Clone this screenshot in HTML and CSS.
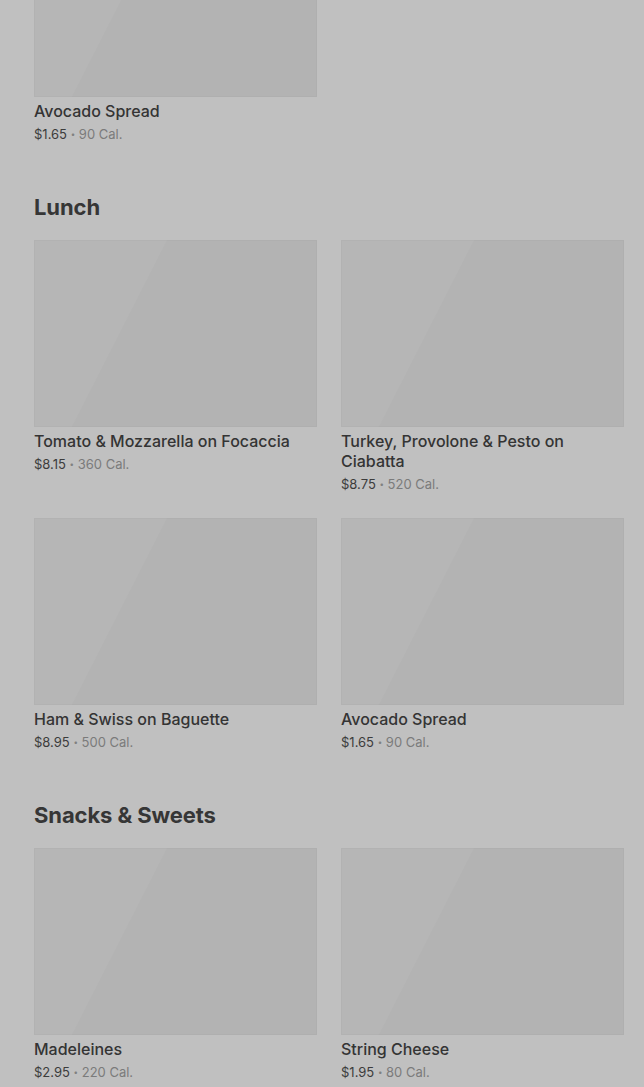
FILE: index.html
```html
<!DOCTYPE html>
<html lang="en">
<head>
<meta charset="utf-8">
<title>Menu</title>
<link rel="stylesheet" href="styles.css">
</head>
<body>
<main class="menu">
  <section class="section section--first">
    <div class="grid">
      <article class="item">
        <div class="thumb"></div>
        <h3 class="item-name">Avocado Spread</h3>
        <p class="item-meta"><span class="price">$1.65</span> <span class="dot">•</span> <span class="cal">90 Cal.</span></p>
      </article>
    </div>
  </section>

  <section class="section">
    <h2 class="section-title">Lunch</h2>
    <div class="grid">
      <article class="item">
        <div class="thumb"></div>
        <h3 class="item-name">Tomato &amp; Mozzarella on Focaccia</h3>
        <p class="item-meta"><span class="price">$8.15</span> <span class="dot">•</span> <span class="cal">360 Cal.</span></p>
      </article>
      <article class="item">
        <div class="thumb"></div>
        <h3 class="item-name">Turkey, Provolone &amp; Pesto on Ciabatta</h3>
        <p class="item-meta"><span class="price">$8.75</span> <span class="dot">•</span> <span class="cal">520 Cal.</span></p>
      </article>
      <article class="item">
        <div class="thumb"></div>
        <h3 class="item-name">Ham &amp; Swiss on Baguette</h3>
        <p class="item-meta"><span class="price">$8.95</span> <span class="dot">•</span> <span class="cal">500 Cal.</span></p>
      </article>
      <article class="item">
        <div class="thumb"></div>
        <h3 class="item-name">Avocado Spread</h3>
        <p class="item-meta"><span class="price">$1.65</span> <span class="dot">•</span> <span class="cal">90 Cal.</span></p>
      </article>
    </div>
  </section>

  <section class="section">
    <h2 class="section-title">Snacks &amp; Sweets</h2>
    <div class="grid">
      <article class="item">
        <div class="thumb"></div>
        <h3 class="item-name">Madeleines</h3>
        <p class="item-meta"><span class="price">$2.95</span> <span class="dot">•</span> <span class="cal">220 Cal.</span></p>
      </article>
      <article class="item">
        <div class="thumb"></div>
        <h3 class="item-name">String Cheese</h3>
        <p class="item-meta"><span class="price">$1.95</span> <span class="dot">•</span> <span class="cal">80 Cal.</span></p>
      </article>
    </div>
  </section>
</main>
</body>
</html>
```

FILE: styles.css
```css
html, body {
  margin: 0;
  padding: 0;
  background: #c0c0c0;
  height: 1087px;
  overflow: hidden;
}

body {
  font-family: Inter, "Noto Sans", "Liberation Sans", sans-serif;
  color: #333;
}

.menu {
  padding: 0 20px 0 34px;
  margin-top: -90px;
}

.section-title {
  margin: 49px 0 19px;
  font-size: 22px;
  line-height: 28px;
  font-weight: 700;
  letter-spacing: -0.1px;
  color: #363636;
}

.grid {
  display: grid;
  grid-template-columns: 1fr 1fr;
  column-gap: 24px;
  row-gap: 24px;
}

.item {
  margin: 0;
}

.thumb {
  height: 187px;
  background: linear-gradient(117deg, #b6b6b6 0%, #b6b6b6 35%, #b3b3b3 35.3%, #b3b3b3 100%);
  box-shadow: inset 0 0 0 1px rgba(0, 0, 0, 0.02);
}

.item-name {
  margin: 4px 0 0;
  font-size: 16px;
  line-height: 20px;
  font-weight: 500;
  color: #343434;
}

.item-meta {
  margin: 3px 0 0;
  font-size: 13px;
  line-height: 20px;
  font-weight: 400;
}

.price {
  color: #3c3c3c;
}

.dot {
  color: #808080;
  font-size: 8px;
  vertical-align: 2px;
}

.cal {
  color: #7b7b7b;
}
```
